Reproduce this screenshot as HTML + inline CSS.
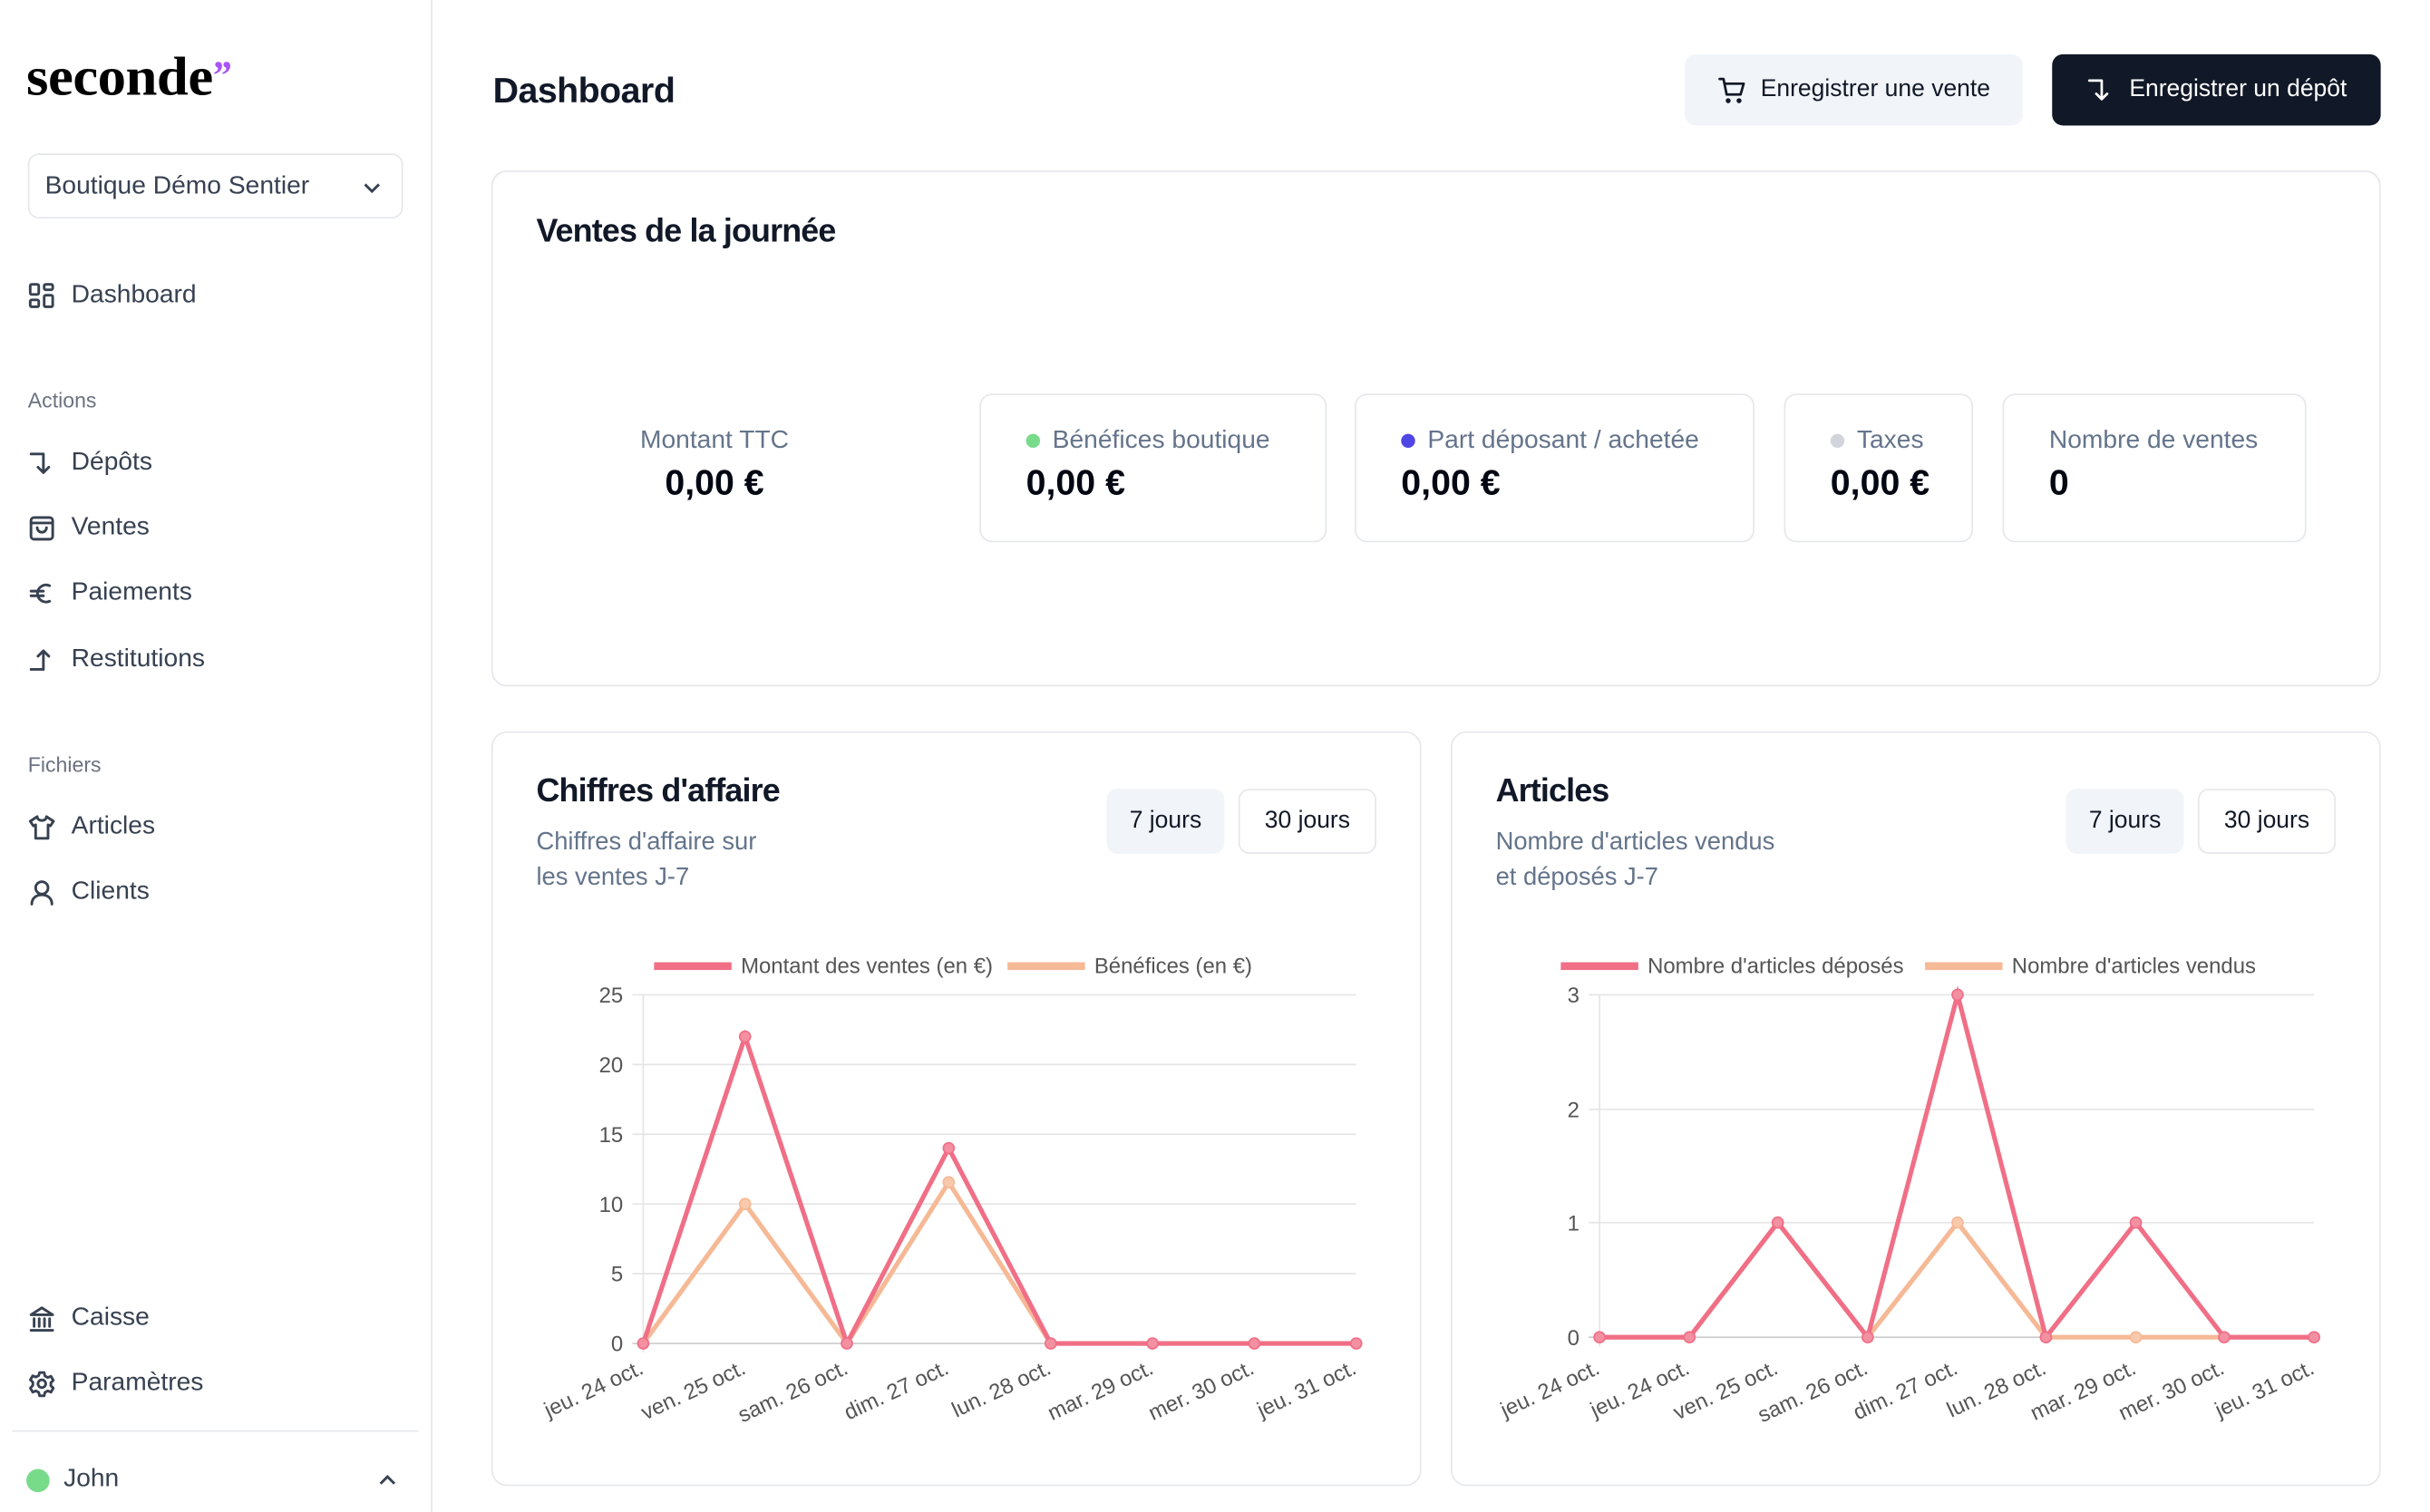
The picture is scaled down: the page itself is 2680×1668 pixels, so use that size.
<!DOCTYPE html>
<html><head><meta charset="utf-8"><style>
*{box-sizing:border-box;margin:0;padding:0}
html,body{width:2680px;height:1668px;overflow:hidden;background:#fff}
#w{width:1568px;height:976px;position:relative;overflow:hidden;background:#fff;font-family:"Liberation Sans",sans-serif;color:#111827;transform:scale(1.7094,1.7094);transform-origin:0 0}
.a{position:absolute}
.side{left:0;top:0;width:279px;height:976px;border-right:1px solid #e5e7eb}
.nav{position:absolute;left:18px;font-size:16.5px;color:#374151;display:flex;align-items:center;gap:10px}
.nav svg{width:18px;height:18px;stroke:#374151;fill:none;stroke-width:1.7;stroke-linecap:round;stroke-linejoin:round}
.sec{position:absolute;left:18px;font-size:13.5px;color:#6b7280}
.card{position:absolute;border:1.5px solid #e5e7eb;border-radius:10px;background:#fff}
.stat{position:absolute;border:1.5px solid #e5e7eb;border-radius:8px;padding:20px 0 0 29px}
.lbl{font-size:16.5px;color:#64748b;display:flex;align-items:center;gap:8px}
.dot{width:9px;height:9px;border-radius:50%}
.val{font-size:23px;font-weight:bold;margin-top:4px;color:#030712}
.btn{position:absolute;height:42px;border-radius:7px;font-size:15.5px;display:flex;align-items:center;justify-content:center}
.h2{position:absolute;font-size:21px;font-weight:bold;letter-spacing:-0.5px}
.sub{position:absolute;font-size:16px;color:#64748b;line-height:23px}
</style></head><body><div id="w">
<div class="a side"></div>
<div class="a" style="left:17px;top:30px;font-family:'Liberation Serif',serif;font-weight:bold;font-size:35px;letter-spacing:-0.3px;color:#000;transform:scaleX(1.05);transform-origin:0 0">seconde</div>
<div class="a" style="left:136px;top:34px;font-family:'Liberation Serif',serif;font-weight:bold;font-size:26px;color:#a855f7;font-style:italic">&#8221;</div>
<div class="a" style="left:18px;top:99px;width:242px;height:42px;border:1.5px solid #e5e7eb;border-radius:7px;font-size:16.5px;color:#374151;padding:11px 0 0 10px">Boutique Démo Sentier
<svg class="a" style="right:12px;top:14px" width="14" height="14" viewBox="0 0 14 14" fill="none" stroke="#374151" stroke-width="1.7"><path d="M2.5 5l4.5 4.5 4.5-4.5"/></svg></div>
<div class="nav" style="top:181px"><svg viewBox="0 0 18 18"><rect x="1.5" y="1.5" width="5.5" height="6.5" rx="1"/><rect x="10.5" y="1.5" width="5.5" height="3.5" rx="1"/><rect x="1.5" y="11.5" width="5.5" height="4.5" rx="1"/><rect x="10.5" y="8.5" width="5.5" height="7.5" rx="1"/></svg>Dashboard</div>
<div class="sec" style="top:251px">Actions</div>
<div class="nav" style="top:289px"><svg viewBox="0 0 18 18"><path d="M2 3h8v12M6.5 11.5L10 15l3.5-3.5"/></svg>Dépôts</div>
<div class="nav" style="top:331px"><svg viewBox="0 0 18 18"><rect x="2" y="2" width="14" height="14" rx="2"/><path d="M2 5.5h14M6 8.5a3 3 0 006 0"/></svg>Ventes</div>
<div class="nav" style="top:373px"><svg viewBox="0 0 18 18"><path d="M14 4a5.5 5.5 0 100 10M2 7.5h8M2 10.5h8"/></svg>Paiements</div>
<div class="nav" style="top:416px"><svg viewBox="0 0 18 18"><path d="M2 15h8V3M6.5 6.5L10 3l3.5 3.5"/></svg>Restitutions</div>
<div class="sec" style="top:486px">Fichiers</div>
<div class="nav" style="top:524px"><svg viewBox="0 0 18 18"><path d="M6 2L1.5 5l2 3L5 7.3V16h8V7.3l1.5.7 2-3L12 2c0 1.5-1.3 2.5-3 2.5S6 3.5 6 2z"/></svg>Articles</div>
<div class="nav" style="top:566px"><svg viewBox="0 0 18 18"><circle cx="9" cy="6" r="4"/><path d="M2.5 16.5c0-4 3-6 6.5-6s6.5 2 6.5 6"/></svg>Clients</div>
<div class="nav" style="top:841px"><svg viewBox="0 0 18 18"><path d="M2 6.5L9 2l7 4.5zM4 9v5M7.3 9v5M10.7 9v5M14 9v5M2 16.5h14"/></svg>Caisse</div>
<div class="nav" style="top:883px"><svg viewBox="0 0 18 18"><circle cx="9" cy="9" r="2.5"/><path d="M7.5 1.8h3l.5 2.2 1.8 1 2.1-.8 1.5 2.6-1.6 1.5v2l1.6 1.5-1.5 2.6-2.1-.8-1.8 1-.5 2.2h-3l-.5-2.2-1.8-1-2.1.8-1.5-2.6L3.2 10V8L1.6 6.5l1.5-2.6 2.1.8 1.8-1z"/></svg>Paramètres</div>
<div class="a" style="left:8px;top:923px;width:262px;height:1px;background:#e5e7eb"></div>
<div class="a" style="left:17px;top:948px;width:15px;height:15px;border-radius:50%;background:#77db8a"></div>
<div class="a" style="left:41px;top:945px;font-size:16.5px;color:#374151">John</div>
<svg class="a" style="left:243px;top:948px" width="14" height="14" viewBox="0 0 14 14" fill="none" stroke="#374151" stroke-width="1.7"><path d="M2.5 9.5L7 5l4.5 4.5"/></svg>

<div class="a" style="left:318px;top:45px;font-size:23px;font-weight:bold;letter-spacing:-0.3px">Dashboard</div>
<div class="btn" style="left:1087px;top:35px;height:46px;width:218px;background:#f1f5f9;color:#111827;gap:9px"><svg width="19" height="19" viewBox="0 0 19 19" fill="none" stroke="#111827" stroke-width="1.6" stroke-linecap="round" stroke-linejoin="round"><path d="M1.5 2h2.5l2 10h9l2-7H5"/><circle cx="7" cy="16" r=".8"/><circle cx="14" cy="16" r=".8"/></svg>Enregistrer une vente</div>
<div class="btn" style="left:1324px;top:35px;height:46px;width:212px;background:#111827;color:#fff;gap:10px"><svg width="18" height="18" viewBox="0 0 18 18" fill="none" stroke="#fff" stroke-width="1.6" stroke-linecap="round" stroke-linejoin="round"><path d="M2 3h8v12M6.5 11.5L10 15l3.5-3.5"/></svg>Enregistrer un dépôt</div>

<div class="card" style="left:317px;top:110px;width:1219px;height:333px"></div>
<div class="h2" style="left:346px;top:138px">Ventes de la journée</div>
<div class="a" style="left:346px;top:275px;width:230px;text-align:center"><div class="lbl" style="justify-content:center">Montant TTC</div><div class="val">0,00 €</div></div>
<div class="stat" style="left:632px;top:254px;width:224px;height:96px"><div class="lbl"><span class="dot" style="background:#77db8a"></span>Bénéfices boutique</div><div class="val">0,00 €</div></div>
<div class="stat" style="left:874px;top:254px;width:258px;height:96px"><div class="lbl"><span class="dot" style="background:#4f46e5"></span>Part déposant / achetée</div><div class="val">0,00 €</div></div>
<div class="stat" style="left:1151px;top:254px;width:122px;height:96px"><div class="lbl"><span class="dot" style="background:#d1d5db"></span>Taxes</div><div class="val">0,00 €</div></div>
<div class="stat" style="left:1292px;top:254px;width:196px;height:96px"><div class="lbl">Nombre de ventes</div><div class="val">0</div></div>

<div class="card" style="left:317px;top:472px;width:600px;height:487px"></div>
<div class="card" style="left:936px;top:472px;width:600px;height:487px"></div>
<div class="h2" style="left:346px;top:499px">Chiffres d'affaire</div>
<div class="sub" style="left:346px;top:532px">Chiffres d'affaire sur<br>les ventes J-7</div>
<div class="h2" style="left:965px;top:499px">Articles</div>
<div class="sub" style="left:965px;top:532px">Nombre d'articles vendus<br>et déposés J-7</div>
<div class="btn" style="left:714px;top:509px;width:76px;background:#f1f5f9">7 jours</div>
<div class="btn" style="left:799px;top:509px;width:89px;border:1.5px solid #e5e7eb">30 jours</div>
<div class="btn" style="left:1333px;top:509px;width:76px;background:#f1f5f9">7 jours</div>
<div class="btn" style="left:1418px;top:509px;width:89px;border:1.5px solid #e5e7eb">30 jours</div>

<svg class="a" style="left:0;top:0" width="1568" height="971" font-family="Liberation Sans,sans-serif" font-size="14" fill="#555">
<g stroke="#e5e5e5" stroke-width="1">
<path d="M408 642H875M408 687H875M408 732H875M408 777H875M408 822H875M415 642V873"/>
<path d="M1025 642H1493M1025 716H1493M1025 789H1493M1032 642V869"/>
</g>
<path d="M408 867H875M1025 863H1493" stroke="#ccc"/>
<rect x="422" y="621" width="50" height="5" fill="#f06f86"/><text x="478" y="628">Montant des ventes (en €)</text>
<rect x="650" y="621" width="50" height="5" fill="#f6b996"/><text x="706" y="628">Bénéfices (en €)</text>
<rect x="1007" y="621" width="50" height="5" fill="#f06f86"/><text x="1063" y="628">Nombre d'articles déposés</text>
<rect x="1242" y="621" width="50" height="5" fill="#f6b996"/><text x="1298" y="628">Nombre d'articles vendus</text>
<g text-anchor="end">
<text x="402" y="647">25</text><text x="402" y="692">20</text><text x="402" y="737">15</text><text x="402" y="782">10</text><text x="402" y="827">5</text><text x="402" y="872">0</text>
<text x="1019" y="647">3</text><text x="1019" y="721">2</text><text x="1019" y="794">1</text><text x="1019" y="868">0</text>
</g>
<polyline fill="none" stroke="#f6b996" stroke-width="3" points="415,867 480.7,777 546.4,867 612.1,763 677.9,867 743.6,867 809.3,867 875,867"/>
<polyline fill="none" stroke="#f06f86" stroke-width="3" points="415,867 480.7,669 546.4,867 612.1,741 677.9,867 743.6,867 809.3,867 875,867"/>
<polyline fill="none" stroke="#f6b996" stroke-width="3" points="1032,863 1090,863 1147,789 1205,863 1263,789 1320,863 1378,863 1435,863 1493,863"/>
<polyline fill="none" stroke="#f06f86" stroke-width="3" points="1032,863 1090,863 1147,789 1205,863 1263,642 1320,863 1378,789 1435,863 1493,863"/>
<g fill="#f390a2" stroke="#f06f86" stroke-width="1">
<circle cx="415" cy="867" r="3.5"/><circle cx="480.7" cy="669" r="3.5"/><circle cx="546.4" cy="867" r="3.5"/><circle cx="612.1" cy="741" r="3.5"/><circle cx="677.9" cy="867" r="3.5"/><circle cx="743.6" cy="867" r="3.5"/><circle cx="809.3" cy="867" r="3.5"/><circle cx="875" cy="867" r="3.5"/>
<circle cx="1032" cy="863" r="3.5"/><circle cx="1090" cy="863" r="3.5"/><circle cx="1147" cy="789" r="3.5"/><circle cx="1205" cy="863" r="3.5"/><circle cx="1263" cy="642" r="3.5"/><circle cx="1320" cy="863" r="3.5"/><circle cx="1378" cy="789" r="3.5"/><circle cx="1435" cy="863" r="3.5"/><circle cx="1493" cy="863" r="3.5"/>
</g>
<circle cx="480.7" cy="777" r="3.5" fill="#f8c9ad" stroke="#f6b996"/><circle cx="612.1" cy="763" r="3.5" fill="#f8c9ad" stroke="#f6b996"/><circle cx="1263" cy="789" r="3.5" fill="#f8c9ad" stroke="#f6b996"/><circle cx="1378" cy="863" r="3.5" fill="#f8c9ad" stroke="#f6b996"/>
<g text-anchor="end">
<text transform="translate(416,886) rotate(-25)">jeu. 24 oct.</text>
<text transform="translate(482,886) rotate(-25)">ven. 25 oct.</text>
<text transform="translate(548,886) rotate(-25)">sam. 26 oct.</text>
<text transform="translate(613,886) rotate(-25)">dim. 27 oct.</text>
<text transform="translate(679,886) rotate(-25)">lun. 28 oct.</text>
<text transform="translate(745,886) rotate(-25)">mar. 29 oct.</text>
<text transform="translate(810,886) rotate(-25)">mer. 30 oct.</text>
<text transform="translate(876,886) rotate(-25)">jeu. 31 oct.</text>
<text transform="translate(1033,886) rotate(-25)">jeu. 24 oct.</text>
<text transform="translate(1091,886) rotate(-25)">jeu. 24 oct.</text>
<text transform="translate(1148,886) rotate(-25)">ven. 25 oct.</text>
<text transform="translate(1206,886) rotate(-25)">sam. 26 oct.</text>
<text transform="translate(1264,886) rotate(-25)">dim. 27 oct.</text>
<text transform="translate(1321,886) rotate(-25)">lun. 28 oct.</text>
<text transform="translate(1379,886) rotate(-25)">mar. 29 oct.</text>
<text transform="translate(1436,886) rotate(-25)">mer. 30 oct.</text>
<text transform="translate(1494,886) rotate(-25)">jeu. 31 oct.</text>
</g>
</svg>
</div></body></html>
